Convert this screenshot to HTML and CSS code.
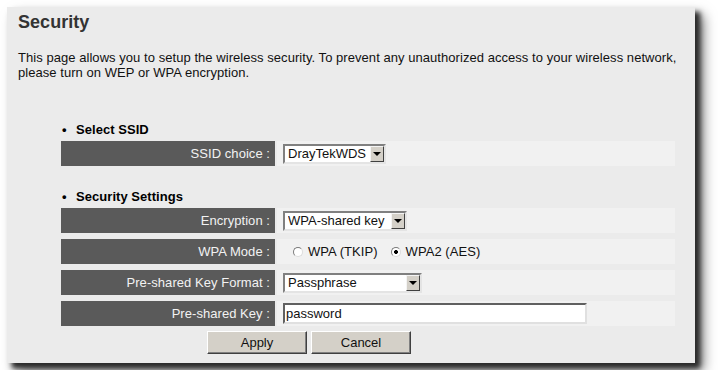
FILE: index.html
```html
<!DOCTYPE html>
<html lang="en">
  <head>
    <meta charset="UTF-8" />
    <title>Security</title>
    <link rel="stylesheet" href="styles.css">
  </head>
  <body>
    <div class="panel">
      <h1>Security</h1>
      <p class="intro">This page allows you to setup the wireless security. To prevent any unauthorized access to your wireless network, please turn on WEP or WPA encryption.</p>

      <div class="section">
        <div class="section-title">Select SSID</div>
        <div class="form-grid">
          <div class="label">SSID choice :</div>
          <div class="value">
            <span class="select-wrap">
              <select class="select ssid-select">
                <option>DrayTekWDS</option>
              </select>
              <span class="arrow"></span>
            </span>
          </div>
        </div>
      </div>

      <div class="section security">
        <div class="section-title">Security Settings</div>
        <div class="form-grid">
          <div class="label">Encryption :</div>
          <div class="value">
            <span class="select-wrap">
              <select class="select enc-select">
                <option>WPA-shared key</option>
              </select>
              <span class="arrow"></span>
            </span>
          </div>

          <div class="label">WPA Mode :</div>
          <div class="value">
            <label class="radio-label"><input type="radio" name="mode" class="radio" />WPA (TKIP)</label>
            <label class="radio-label"><input type="radio" name="mode" class="radio" checked />WPA2 (AES)</label>
          </div>

          <div class="label">Pre-shared Key Format :</div>
          <div class="value">
            <span class="select-wrap">
              <select class="select format-select">
                <option>Passphrase</option>
              </select>
              <span class="arrow"></span>
            </span>
          </div>

          <div class="label">Pre-shared Key :</div>
          <div class="value">
            <input type="text" class="text-input" value="password" />
          </div>
        </div>
      </div>

      <div class="buttons">
        <button class="btn">Apply</button>
        <button class="btn">Cancel</button>
      </div>
    </div>
  </body>
</html>
```

FILE: styles.css
```css
* {
  box-sizing: border-box;
}
body {
  margin: 0;
  background: #ffffff;
  font-family: "Liberation Sans", Arial, sans-serif;
  font-size: 13px;
  letter-spacing: 0.05px;
  color: #111111;
}

.panel {
  margin: 7px;
  width: 688px;
  height: 356px;
  padding: 4px 11px 9px;
  background: #ebebeb;
  box-shadow: 5px 5px 5px #2a2a2a, 8px 8px 12px rgba(0, 0, 0, 0.55);
}

h1 {
  margin: 0;
  font-size: 18px;
  line-height: 22px;
  color: #333333;
}

.intro {
  margin: 17px 0 0;
  line-height: 15px;
}

.section {
  margin: 42px 0 0 43px;
}
.section.security {
  margin-top: 23px;
}

.section-title {
  font-weight: bold;
  line-height: 15px;
  margin-bottom: 4px;
  color: #000000;
}
.section-title::before {
  content: "\2022";
  display: inline-block;
  width: 14px;
  padding-left: 1px;
}

.form-grid {
  display: grid;
  grid-template-columns: 214px 398px;
  grid-auto-rows: 25px;
  column-gap: 2px;
  row-gap: 6px;
}

.label {
  background: #5a5a5a;
  color: #f2f2f2;
  display: flex;
  align-items: center;
  justify-content: flex-end;
  padding-right: 5px;
}

.value {
  background: #f1f1f1;
  display: flex;
  align-items: center;
  padding-left: 6px;
}

/* old-style windows select */
.select-wrap {
  position: relative;
  display: inline-block;
  height: 20px;
}
.select {
  appearance: none;
  -webkit-appearance: none;
  height: 20px;
  margin: 0;
  padding: 0 18px 0 3px;
  font-family: inherit;
  font-size: 13px;
  color: #111111;
  background: #ffffff;
  border: 2px solid;
  border-color: #808080 #e4e4e4 #e4e4e4 #808080;
  border-radius: 0;
  outline: none;
}
.ssid-select {
  width: 103px;
}
.enc-select {
  width: 124px;
}
.format-select {
  width: 139px;
}
.arrow {
  position: absolute;
  top: 2px;
  right: 2px;
  width: 14px;
  height: 16px;
  background: #d4d0c8;
  border: 1px solid;
  border-color: #f4f4f4 #404040 #404040 #f4f4f4;
  pointer-events: none;
}
.arrow::after {
  content: "";
  position: absolute;
  left: 2px;
  top: 5px;
  border-left: 4px solid transparent;
  border-right: 4px solid transparent;
  border-top: 4px solid #000000;
}

.radio-label {
  display: flex;
  align-items: center;
  margin-left: 10px;
  margin-right: 3px;
}
.radio {
  appearance: none;
  -webkit-appearance: none;
  width: 10px;
  height: 10px;
  margin: 0 5px 0 0;
  border-radius: 50%;
  border: 1px solid;
  border-color: #7a7a7a #dcdcdc #dcdcdc #7a7a7a;
  background: #ffffff;
}
.radio:checked {
  background: radial-gradient(circle, #000000 0, #000000 1.8px, #ffffff 2.2px);
}

.text-input {
  width: 304px;
  height: 21px;
  margin: 0;
  padding: 0 1px;
  font-family: inherit;
  font-size: 13px;
  color: #111111;
  background: #ffffff;
  border: 2px solid;
  border-color: #606060 #e0e0e0 #e0e0e0 #606060;
  outline: none;
}

.buttons {
  display: flex;
  gap: 4px;
  margin: 5px 0 0 189px;
}
.btn {
  width: 100px;
  height: 23px;
  padding: 0;
  background: #d4d0c8;
  border: 1px solid;
  border-color: #ffffff #404040 #404040 #ffffff;
  box-shadow: inset -1px -1px 0 #808080;
  font-family: inherit;
  font-size: 13px;
  color: #111111;
}
```
